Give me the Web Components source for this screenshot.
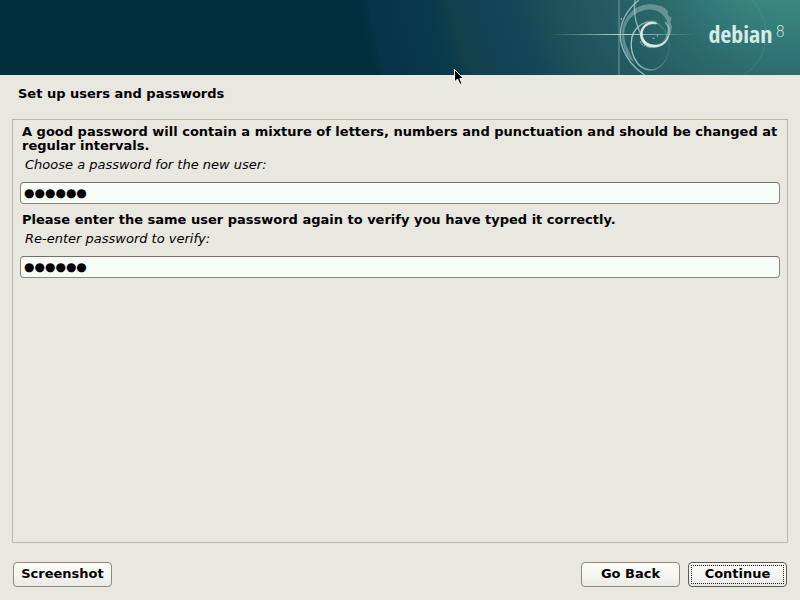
<!DOCTYPE html>
<html lang="en">
<head>
<meta charset="utf-8">
<title>Debian installer</title>
<style>
html, body { height: 100%; margin: 0; }
body { background: #e8e7e0; color: #000; font: 13px/14px "DejaVu Sans", sans-serif; }
</style>
</head>
<body>
<installer-window>
  <installer-banner slot="banner"></installer-banner>
  <span slot="title">Set up users and passwords</span>
  <password-question input-id="pw" label="Choose a password for the new user:" value="●●●●●●">A good password will contain a mixture of letters, numbers and punctuation and should be changed at regular intervals.</password-question>
  <password-question input-id="verify" label="Re-enter password to verify:" value="●●●●●●">Please enter the same user password again to verify you have typed it correctly.</password-question>
  <installer-button slot="left">Screenshot</installer-button>
  <installer-button slot="right">Go Back</installer-button>
  <installer-button slot="right" focused>Continue</installer-button>
</installer-window>
<mouse-pointer></mouse-pointer>
<script>
const define = (name, html, setup) => {
  const template = document.createElement('template');
  template.innerHTML = html;
  customElements.define(name, class extends HTMLElement {
    constructor() {
      super();
      this.attachShadow({ mode: 'open' }).append(template.content.cloneNode(true));
    }
    connectedCallback() { if (setup) setup(this, this.shadowRoot); }
  });
};

define('installer-window', `
<style>
:host { display: flex; flex-direction: column; min-height: 100vh; }
h1 { margin: 0; padding: 12px 18px 18px; font-size: 13px; line-height: 14px; }
main { flex: 1; display: flex; flex-direction: column; gap: 9px; margin: 0 12px; padding: 5px 7px; border: 1px solid #bbb6a8; }
footer { display: flex; justify-content: space-between; padding: 19px 13px 13px; }
.group { display: flex; gap: 8px; }
</style>
<slot name="banner"></slot>
<h1><slot name="title"></slot></h1>
<main><slot></slot></main>
<footer><div class="group"><slot name="left"></slot></div><div class="group"><slot name="right"></slot></div></footer>`);

define('installer-banner', `
<style>
:host { position: relative; display: flex; justify-content: flex-end; align-items: center; height: 75px; overflow: hidden;
  background: radial-gradient(circle at calc(100% - 10px) -60px, #3a8981 60px, #34797a 100px, #2b696b 145px, #235b63 195px, #1f5159 245px, #174858 275px, #114354 310px, #123f4a 345px, #083a4a 365px, #073448 425px, #002f3d 436px); }
svg { position: absolute; right: 0; top: 0; width: 260px; height: 75px; }
.brand { position: relative; display: flex; padding: 0 15px 8px 0; color: #d5ebe7; }
.name { font: 24px/30px "Open Sans Condensed", "DejaVu Sans Condensed", sans-serif; }
.version { font: 200 15px/26px "DejaVu Sans", sans-serif; margin-left: 3px; }
</style>
<svg viewBox="0 0 780 225" fill="none" aria-hidden="true">
  <defs>
    <linearGradient id="beam"><stop offset="0" stop-color="#b9d8d6" stop-opacity="0"/><stop offset=".5" stop-color="#d0e8e5" stop-opacity=".9"/><stop offset="1" stop-color="#b9d8d6" stop-opacity="0"/></linearGradient>
    <linearGradient id="fade" x1="0" y1="0" x2="1" y2="0"><stop offset="0" stop-color="#b5d5d3" stop-opacity=".9"/><stop offset="1" stop-color="#b5d5d3" stop-opacity=".1"/></linearGradient>
  </defs>
  <path d="M237 0V225" stroke="#86abae" stroke-opacity=".5" stroke-width="5"/>
  <path d="M30 102H470V105H30Z" fill="url(#beam)"/>
  <path d="M255 153C237 105 244 63 276 33C300 10 345 6 374 24L384 34L383 44L395 54L391 66L396 80C393 105 383 121 363 134C378 113 388 91 381 65C373 38 346 25 318 29C287 34 263 56 255 84C250 105 254 127 266 151L282 187C266 177 257 164 255 153Z" fill="#94bab9" fill-opacity=".55"/>
  <path d="M297 0C262 28 241 61 241 106C241 151 272 198 314 225" stroke="#a6c9c9" stroke-opacity=".85" stroke-width="4"/>
  <path d="M285 0C281 33 285 64 298 92C303 108 307 119 316 128" stroke="#a6c9c9" stroke-opacity=".8" stroke-width="4"/>
  <path d="M350 66C322 57 285 77 276 111C267 153 286 207 331 210C363 210 387 176 387 142C386 109 374 79 345 66" stroke="url(#fade)" stroke-width="4"/>
  <path d="M349 69C325 59 303 78 301 102C301 128 319 142 341 142C367 141 383 126 385 108C378 127 361 136 342 135C322 134 308 121 307 103C306 82 326 67 349 72Z" fill="#e0edeb" stroke="#d6e8e6" stroke-width="2"/>
  <path d="M385 108C391 91 386 76 375 66" stroke="#b5d0ce" stroke-opacity=".6" stroke-width="5"/>
  <path d="M301 124L307 134L320 139L334 143" stroke="#b0cbc9" stroke-opacity=".7" stroke-width="5" stroke-dasharray="5 3"/>
  <path d="M338 115h5M350 108h4M244 54v5" stroke="#b7d0cf" stroke-width="3"/>
  <path d="M637 0C697 68 694 170 611 225" stroke="#73a7a2" stroke-opacity=".25" stroke-width="3"/>
</svg>
<div class="brand"><span class="name">debian</span><span class="version">8</span></div>`);

define('password-question', `
<style>
:host { display: block; }
p { margin: 0 2px 5px; font-weight: bold; }
label { display: block; margin: 0 5px 10px; font-style: italic; }
input { display: block; box-sizing: border-box; width: 100%; height: 22px; margin: 0; padding: 0 3px; font: 12px/14px "DejaVu Sans", sans-serif; color: #000;
  background: #f8fcf7; border: 1px solid #8c877a; border-top-color: #777064; border-radius: 4px; outline: 0; }
</style>
<p><slot></slot></p><label></label><input type="text" autocomplete="off">`, (host, root) => {
  const label = root.querySelector('label'), input = root.querySelector('input');
  input.id = host.getAttribute('input-id');
  input.value = host.getAttribute('value');
  label.htmlFor = input.id;
  label.textContent = host.getAttribute('label');
});

define('installer-button', `
<style>
:host { display: block; }
button { display: grid; place-items: center; position: relative; box-sizing: border-box; min-width: 99px; height: 25px; margin: 0; padding: 0 7px 2px; font: bold 13px/14px "DejaVu Sans", sans-serif; color: #000;
  background: linear-gradient(#fbfbf9, #f4f4f0 60%, #e9e8e2); border: 1px solid #8f897c; border-radius: 4px; }
:host([focused]) button { border-color: #5e5a50; }
:host([focused]) button::after { content: ""; position: absolute; inset: 2px; border: 1px dotted #222; }
</style>
<button type="button"><slot></slot></button>`);

define('mouse-pointer', `
<style>
:host { position: absolute; left: 454px; top: 69px; pointer-events: none; }
svg { display: block; }
</style>
<svg width="10" height="16" viewBox="0 0 10 16" aria-hidden="true"><path d="M.5.500V13L3.500 10L6 15.500L8 14.500L5.800 9.500H9.500Z" stroke="#fff" fill="#000"/></svg>`);
</script>
</body>
</html>
